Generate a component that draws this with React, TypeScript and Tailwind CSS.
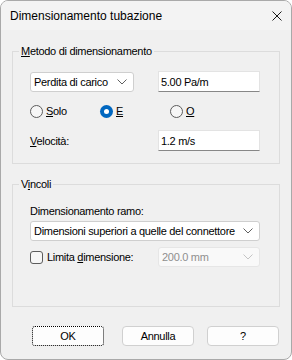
import React from "react";

const font = { fontFamily: '"Liberation Sans", Arial, sans-serif' };

function Chevron({ color = "#606060" }: { color?: string }) {
  return (
    <svg width="10" height="6" viewBox="0 0 10 6" fill="none">
      <path d="M0.5 0.5 L5 5 L9.5 0.5" stroke={color} strokeWidth="1" />
    </svg>
  );
}

function Radio({ checked }: { checked?: boolean }) {
  if (checked) {
    return (
      <span className="w-[13px] h-[13px] rounded-full bg-[#0067c0] flex items-center justify-center shrink-0">
        <span className="w-[5px] h-[5px] rounded-full bg-white" />
      </span>
    );
  }
  return <span className="w-[13px] h-[13px] rounded-full border border-[#5c5c5c] bg-[#f6f6f6] shrink-0" />;
}

function TextBox({ value }: { value: string }) {
  return (
    <div className="w-[102px] h-[21px] bg-white border border-[#e3e3e3] border-b-[#878787] flex items-center pl-[2px] text-black">
      {value}
    </div>
  );
}

export default function App() {
  return (
    <div
      className="w-[292px] h-[360px] bg-[#f0f0f0] rounded-[8px] border border-[#a9a9a9] overflow-hidden flex flex-col text-[11px] leading-[16px] tracking-[-0.3px] text-black"
      style={font}
    >
      <div className="h-[29px] bg-[#f3f3f3] flex items-center justify-between pl-[9px] pr-[9px] shrink-0">
        <span className="text-[12px] tracking-normal">Dimensionamento tubazione</span>
        <svg width="10" height="10" viewBox="0 0 10 10">
          <path d="M0.5 0.5 L9.5 9.5 M9.5 0.5 L0.5 9.5" stroke="#1a1a1a" strokeWidth="1" />
        </svg>
      </div>

      <div className="px-[11px] flex flex-col">
        {/* Metodo di dimensionamento */}
        <fieldset className="mt-[13px] m-0 p-0 border border-[#dcdcdc] min-w-0">
          <legend className="ml-[6px] px-[2px] leading-[16px]">
            <span className="underline">M</span>etodo di dimensionamento
          </legend>
          <div className="pl-[17px] pt-[12px] pb-[12px] flex flex-col">
            <div className="flex items-end">
              <div className="w-[104px] h-[20px] bg-white border border-[#cfcfcf] rounded-[3px] flex items-center justify-between pl-[3px] pr-[6px]">
                <span>Perdita di carico</span>
                <Chevron />
              </div>
              <div className="ml-[24px]">
                <TextBox value="5.00 Pa/m" />
              </div>
            </div>

            <div className="mt-[11px] flex items-center h-[16px]">
              <div className="w-[70px] flex items-center gap-[3px]">
                <Radio />
                <span>
                  <span className="underline">S</span>olo
                </span>
              </div>
              <div className="w-[70px] flex items-center gap-[3px]">
                <Radio checked />
                <span className="underline">E</span>
              </div>
              <div className="w-[70px] flex items-center gap-[3px]">
                <Radio />
                <span className="underline">O</span>
              </div>
            </div>

            <div className="mt-[11px] flex items-center">
              <span className="w-[128px]">
                <span className="underline">V</span>elocità:
              </span>
              <TextBox value="1.2 m/s" />
            </div>
          </div>
        </fieldset>

        {/* Vincoli */}
        <fieldset className="mt-[12px] m-0 p-0 border border-[#dcdcdc] min-w-0">
          <legend className="ml-[6px] px-[2px] leading-[16px]">
            V<span className="underline">i</span>ncoli
          </legend>
          <div className="pl-[17px] pt-[11px] pb-[39px] flex flex-col">
            <span>Dimensionamento ramo:</span>
            <div className="mt-[2px] w-[230px] h-[20px] bg-white border border-[#cfcfcf] rounded-[3px] flex items-center pl-[3px] pr-[6px]">
              <span className="flex-1 overflow-hidden whitespace-nowrap">
                Dimensioni superiori a quelle del connettore
              </span>
              <span className="ml-[4px]">
                <Chevron />
              </span>
            </div>
            <div className="mt-[6px] flex items-center">
              <div className="w-[128px] flex items-center gap-[4px]">
                <span className="w-[13px] h-[13px] rounded-[3px] border border-[#5c5c5c] bg-[#f6f6f6] shrink-0" />
                <span>
                  Limita <span className="underline">d</span>imensione:
                </span>
              </div>
              <div className="w-[102px] h-[20px] bg-[#f9f9f9] border border-[#e6e6e6] rounded-[3px] flex items-center justify-between pl-[3px] pr-[6px] text-[#8f8f8f]">
                <span>200.0 mm</span>
                <Chevron color="#c4c4c4" />
              </div>
            </div>
          </div>
        </fieldset>

        {/* Buttons */}
        <div className="mt-[19px] flex">
          <button className="ml-[20px] w-[72px] h-[20px] bg-[#fdfdfd] border border-dotted border-black rounded-[3px] flex items-center justify-center">
            OK
          </button>
          <button className="ml-[18px] w-[72px] h-[20px] bg-[#fdfdfd] border border-[#d0d0d0] rounded-[4px] flex items-center justify-center">
            Annulla
          </button>
          <button className="ml-[13px] w-[72px] h-[20px] bg-[#fdfdfd] border border-[#d0d0d0] rounded-[4px] flex items-center justify-center">
            ?
          </button>
        </div>
      </div>
    </div>
  );
}
